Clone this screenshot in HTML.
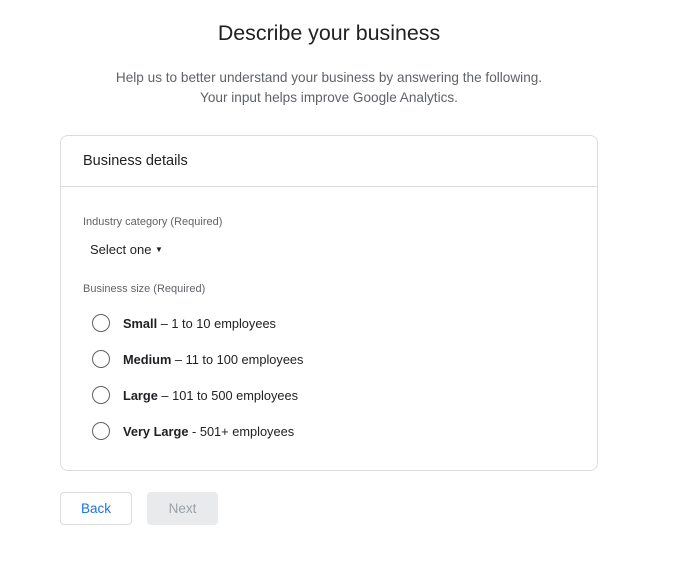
<!DOCTYPE html>
<html><head><style>
body{margin:0;width:680px;height:571px;background:#fff;font-family:"Liberation Sans",sans-serif;position:relative;overflow:hidden}
.a{position:absolute;white-space:nowrap}
h1{position:absolute;top:21px;left:0;width:658px;text-align:center;margin:0;font-weight:400;font-size:21.4px;color:#202124}
.sub{position:absolute;top:68px;left:0;width:658px;text-align:center;font-size:13.6px;color:#5f6368;line-height:19.5px}
.card{position:absolute;left:60px;top:135px;width:536px;height:334px;border:1px solid #dadce0;border-radius:8px}
.hr{position:absolute;left:0;right:0;top:50px;border-top:1px solid #dadce0}
.lbl{font-size:11px;color:#5f6368}
.r{position:absolute;left:31px;width:16px;height:16px;border:1.5px solid #5f6368;border-radius:50%}
.rt{position:absolute;left:62px;font-size:12.8px;color:#202124}
.btn{position:absolute;top:492px;height:31px;border-radius:4px;font-size:13.5px;text-align:center;line-height:31px}
</style></head><body>
<h1>Describe your business</h1>
<div class="sub">Help us to better understand your business by answering the following.<br>Your input helps improve Google Analytics.</div>
<div class="card">
<div class="a" style="left:22px;top:17px;font-size:14.5px;color:#202124">Business details</div>
<div class="hr"></div>
<div class="a lbl" style="left:22px;top:80px">Industry category (Required)</div>
<div class="a" style="left:29px;top:106px;font-size:13px;color:#202124">Select one <span style="font-size:8px;position:relative;top:-2px">▼</span></div>
<div class="a lbl" style="left:22px;top:147px">Business size (Required)</div>
<div class="r" style="top:178px"></div><div class="a rt" style="top:180px"><b>Small</b> – 1 to 10 employees</div>
<div class="r" style="top:214px"></div><div class="a rt" style="top:216px"><b>Medium</b> – 11 to 100 employees</div>
<div class="r" style="top:250px"></div><div class="a rt" style="top:252px"><b>Large</b> – 101 to 500 employees</div>
<div class="r" style="top:286px"></div><div class="a rt" style="top:288px"><b>Very Large</b> - 501+ employees</div>
</div>
<div class="btn" style="left:60px;width:70px;border:1px solid #dadce0;color:#1a73e8;height:31px">Back</div>
<div class="btn" style="left:147px;width:71px;height:33px;line-height:33px;background:#e8eaeb;color:#9aa0a6">Next</div>
</body></html>
